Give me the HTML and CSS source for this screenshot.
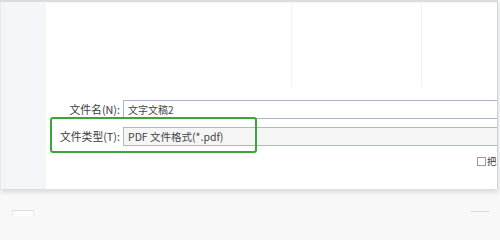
FILE: index.html
```html
<!DOCTYPE html>
<html lang="zh-CN">
<head>
<meta charset="utf-8">
<title>另存为</title>
<link rel="stylesheet" href="styles.css">
</head>
<body>
<div class="dialog">
  <div class="sidebar"></div>
  <div class="main">
    <div class="files">
      <div class="col col-name"></div>
      <div class="col col-date"></div>
      <div class="col col-type"></div>
    </div>
    <div class="form">
      <div class="row">
        <label class="label">文件名(N):</label>
        <div class="field">文字文稿2</div>
      </div>
      <div class="row">
        <label class="label">文件类型(T):</label>
        <div class="field select">PDF 文件格式(*.pdf)</div>
      </div>
      <div class="opt">
        <span class="check"></span><span class="opt-text">把</span>
      </div>
    </div>
    <div class="highlight"></div>
  </div>
</div>
<div class="below">
  <div class="tab"></div>
  <div class="mark"></div>
</div>
</body>
</html>
```

FILE: styles.css
```css
html, body {
  margin: 0;
  padding: 0;
}
body {
  width: 500px;
  height: 216px;
  overflow: hidden;
  background: #f8f8f8;
  font-family: "Noto Sans CJK SC", "Microsoft YaHei", sans-serif;
  font-size: 11px;
  color: #3a3a3a;
}
.dialog {
  display: flex;
  width: 498px;
  height: 189px;
  box-sizing: border-box;
  border-top: 2px solid #dcdcdc;
  border-right: 1px solid #cdd3db;
  background: #fff;
  box-shadow: 0 3px 5px rgba(0, 0, 0, 0.13);
}
.sidebar {
  width: 46px;
  flex: none;
  box-sizing: border-box;
  background: #f4f6f9;
  border-left: 1px solid #e4e7ec;
  box-shadow: inset 3px 0 0 #f4f6f9, inset 4px 0 0 #eceff3;
}
.main {
  position: relative;
  flex: 1;
  overflow: hidden;
}
.files {
  display: flex;
  height: 84px;
  border-top: 1px solid #f6f6f6;
}
.col-name {
  width: 245px;
  border-right: 1px solid #f1f1f1;
}
.col-date {
  width: 129px;
  border-right: 1px solid #f1f1f1;
}
.col-type {
  flex: 1;
}
.form {
  padding-top: 13px;
}
.row {
  display: flex;
  align-items: center;
  margin-bottom: 8px;
}
.label {
  width: 77px;
  flex: none;
  text-align: right;
  padding-right: 3px;
  box-sizing: border-box;
  white-space: nowrap;
  line-height: 17px;
  font-size: 10.8px;
}
.field {
  flex: 1;
  height: 19px;
  box-sizing: border-box;
  border: 1px solid #a9b4c6;
  border-right: none;
  padding-left: 4px;
  line-height: 17px;
  white-space: nowrap;
  font-size: 10px;
  color: #444;
}
.select {
  height: 19px;
  background: #f5f5f5;
  border-color: #aab8d0;
  font-size: 10.5px;
}
.opt {
  display: flex;
  align-items: center;
  padding-left: 431px;
  margin-top: 1px;
  white-space: nowrap;
}
.check {
  width: 9px;
  height: 9px;
  flex: none;
  box-sizing: border-box;
  border: 1px solid #9a9a9a;
  background: #fff;
  margin-right: 1px;
}
.opt-text {
  line-height: 14px;
  font-size: 9.5px;
}
.highlight {
  position: absolute;
  left: 4px;
  top: 115px;
  width: 207px;
  height: 36px;
  box-sizing: border-box;
  border: 2px solid #3aa53a;
  border-radius: 3px;
}
.below {
  display: flex;
  justify-content: space-between;
  padding: 21px 10px 0 12px;
}
.tab {
  width: 20px;
  height: 6px;
  border-top: 1px solid #dedede;
  border-left: 1px solid #e8e8e8;
  border-right: 1px solid #e8e8e8;
  background: #fdfdfd;
}
.mark {
  width: 20px;
  height: 1px;
  margin-top: 1px;
  background: #dcdcdc;
}
```
